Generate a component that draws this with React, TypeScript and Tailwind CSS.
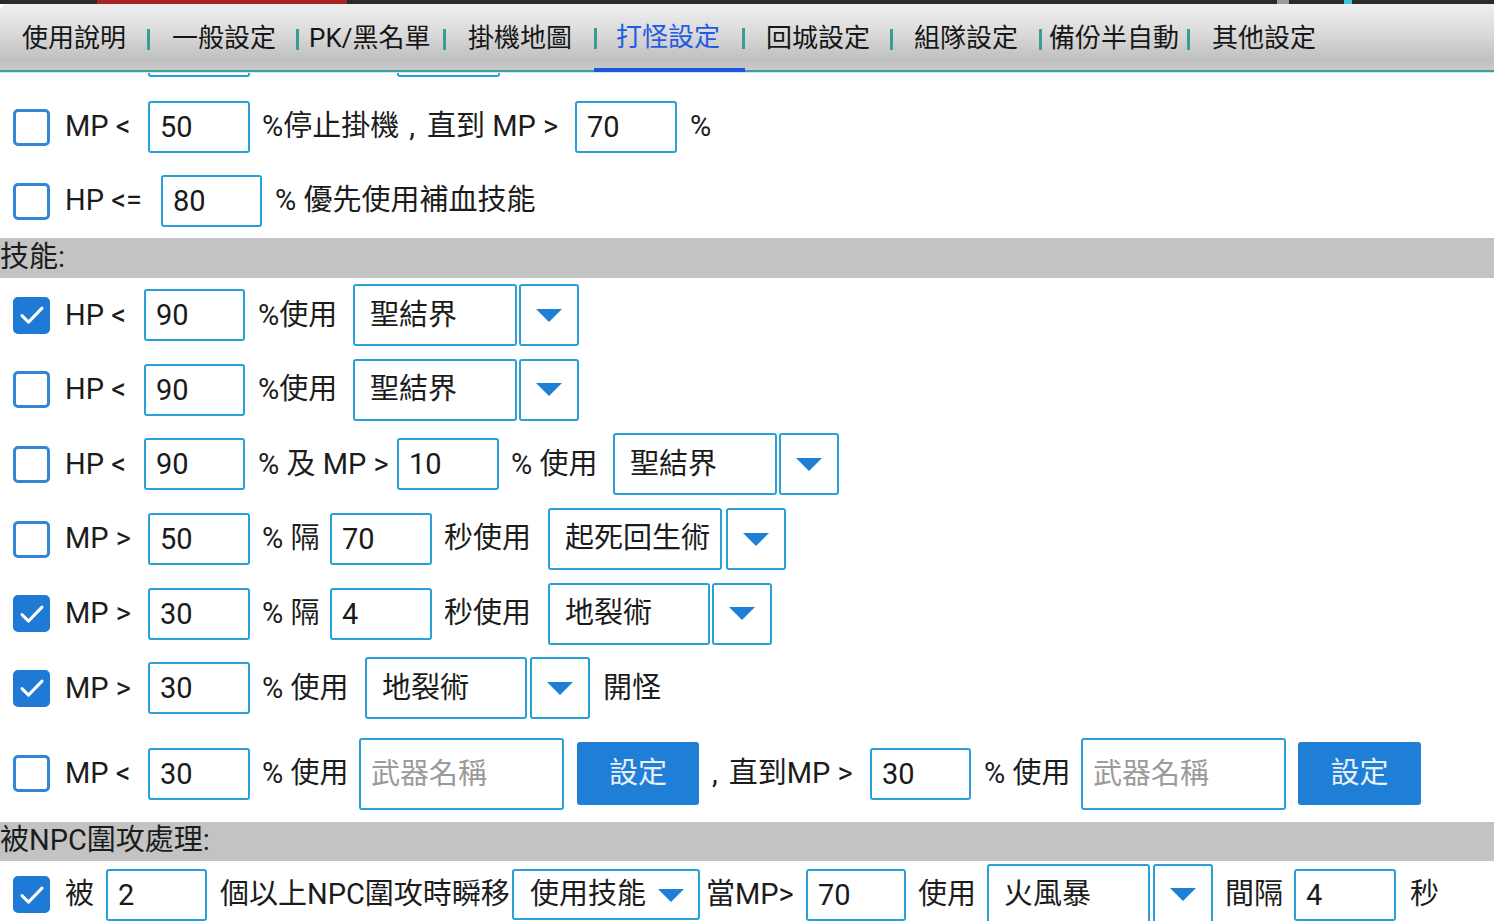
import React from "react";

const Check = ({ on = false }: { on?: boolean }) => (
  <div
    className={
      on
        ? "ml-[13px] w-[37px] h-[37px] shrink-0 rounded-[5px] border-[3px] border-[#1f7ad6] bg-[#1f7ad6] flex items-center justify-center"
        : "ml-[13px] w-[37px] h-[37px] shrink-0 rounded-[5px] border-[3px] border-[#3385d6] bg-white"
    }
  >
    {on && (
      <svg width="30" height="30" viewBox="0 0 24 24" fill="none">
        <path d="M4 12.5l5.2 5.2L20 6.5" stroke="#fff" strokeWidth="2.4" strokeLinecap="round" strokeLinejoin="round" />
      </svg>
    )}
  </div>
);

const Tri = () => (
  <svg width="26" height="13" viewBox="0 0 26 13">
    <polygon points="0,0 26,0 13,13" fill="#1f7fd6" />
  </svg>
);

const Sep = () => <div className="w-[3px] h-[21px] bg-[#3a9d93] shrink-0 mt-[2px]" />;

const inputCls =
  "h-[52px] shrink-0 border-2 border-[#2aa0d8] rounded-[3px] px-[10px] text-[29px] text-[#1a1a1a] bg-white outline-none";

export default function App() {
  return (
    <div className="w-[1494px] h-[921px] overflow-hidden bg-white font-['Roboto','Noto_Sans_CJK_TC',sans-serif] text-[29px] text-[#1c1c1c]">
      {/* top strip */}
      <div className="h-[4px] bg-[#2a2a2a] flex">
        <div className="ml-[97px] w-[250px] bg-[#a82323]" />
        <div className="ml-[930px] w-[12px] bg-[#9a9a9a]" />
        <div className="ml-[55px] w-[8px] bg-[#3cc6d8]" />
      </div>

      {/* tab bar */}
      <div className="h-[68px] rounded-tl-[8px] border-b-2 border-[#3f9e98] bg-[linear-gradient(to_bottom,#efefef_0%,#dadada_45%,#bfbfbf_85%,#cacaca_100%)] flex items-stretch text-[26px] text-[#161616]">
        <div className="flex items-center pt-[2px]">
          <span className="ml-[22px] w-[125px]">使用說明</span>
          <Sep />
          <span className="ml-[22px] w-[124px]">一般設定</span>
          <Sep />
          <span className="ml-[10px] w-[134px]">PK/黑名單</span>
          <Sep />
          <span className="ml-[22px] w-[126px]">掛機地圖</span>
        </div>
        <div className="w-[151px] flex items-center pt-[2px] border-b-[4px] border-[#1a55e3] -mb-[2px]">
          <Sep />
          <span className="ml-[19px] w-[126px] text-[#1f5be6]">打怪設定</span>
          <Sep />
        </div>
        <div className="flex items-center pt-[2px]">
          <span className="ml-[21px] w-[124px]">回城設定</span>
          <Sep />
          <span className="ml-[21px] w-[125px]">組隊設定</span>
          <Sep />
          <span className="ml-[7px] w-[138px]">備份半自動</span>
          <Sep />
          <span className="ml-[22px]">其他設定</span>
        </div>
      </div>
      <div className="h-[1px] bg-[#c4ecec]" />

      {/* peeking inputs from the row above */}
      <div className="h-[17px] flex items-start">
        <div className="ml-[148px] w-[102px] h-[4px] border-x-2 border-b-2 border-[#2aa0d8] rounded-b-[3px]" />
        <div className="ml-[147px] w-[103px] h-[4px] border-x-2 border-b-2 border-[#2aa0d8] rounded-b-[3px]" />
      </div>

      {/* row 1 */}
      <div className="h-[74px] flex items-center">
        <Check />
        <span className="ml-[15px] w-[83px] shrink-0">MP &lt;</span>
        <input readOnly value="50" className={inputCls + " w-[102px]"} />
        <span className="ml-[12px] w-[313px] shrink-0">
          %停止掛機<span className="ml-[10px] mr-[12px]">,</span>直到 MP &gt;
        </span>
        <input readOnly value="70" className={inputCls + " w-[102px]"} />
        <span className="ml-[13px]">%</span>
      </div>

      {/* row 2 */}
      <div className="h-[74px] flex items-center">
        <Check />
        <span className="ml-[15px] w-[96px] shrink-0">HP &lt;=</span>
        <input readOnly value="80" className={inputCls + " w-[101px]"} />
        <span className="ml-[13px]">% 優先使用補血技能</span>
      </div>

      <div className="h-[40px] bg-[#c3c3c3] flex items-center">技能:</div>

      {/* skill rows */}
      {[true, false].map((on, i) => (
        <div key={i} className="h-[74.6px] flex items-center">
          <Check on={on} />
          <span className="ml-[15px] w-[79px] shrink-0">HP &lt;</span>
          <input readOnly value="90" className={inputCls + " w-[101px] h-[51px]"} />
          <span className="ml-[13px] w-[95px] shrink-0">%使用</span>
          <SelectBox w="w-[164px]" text="聖結界" />
          <DropBtn ml="ml-[2px]" />
        </div>
      ))}

      <div className="h-[74.6px] flex items-center">
        <Check />
        <span className="ml-[15px] w-[79px] shrink-0">HP &lt;</span>
        <input readOnly value="90" className={inputCls + " w-[101px] h-[51px]"} />
        <span className="ml-[13px] w-[139px] shrink-0">% 及 MP &gt;</span>
        <input readOnly value="10" className={inputCls + " w-[102px] h-[51px]"} />
        <span className="ml-[12px] w-[102px] shrink-0">% 使用</span>
        <SelectBox w="w-[164px]" text="聖結界" />
        <DropBtn ml="ml-[2px]" />
      </div>

      <div className="h-[74.6px] flex items-center">
        <Check />
        <span className="ml-[15px] w-[83px] shrink-0">MP &gt;</span>
        <input readOnly value="50" className={inputCls + " w-[102px] h-[51px]"} />
        <span className="ml-[12px] w-[68px] shrink-0">% 隔</span>
        <input readOnly value="70" className={inputCls + " w-[102px] h-[51px]"} />
        <span className="ml-[12px] w-[104px] shrink-0">秒使用</span>
        <SelectBox w="w-[174px]" text="起死回生術" />
        <DropBtn ml="ml-[4px]" />
      </div>

      <div className="h-[74.6px] flex items-center">
        <Check on />
        <span className="ml-[15px] w-[83px] shrink-0">MP &gt;</span>
        <input readOnly value="30" className={inputCls + " w-[102px] h-[51px]"} />
        <span className="ml-[12px] w-[68px] shrink-0">% 隔</span>
        <input readOnly value="4" className={inputCls + " w-[102px] h-[51px]"} />
        <span className="ml-[12px] w-[104px] shrink-0">秒使用</span>
        <SelectBox w="w-[162px]" text="地裂術" />
        <DropBtn ml="ml-[2px]" />
      </div>

      <div className="h-[74.6px] flex items-center">
        <Check on />
        <span className="ml-[15px] w-[83px] shrink-0">MP &gt;</span>
        <input readOnly value="30" className={inputCls + " w-[102px] h-[51px]"} />
        <span className="ml-[12px] w-[103px] shrink-0">% 使用</span>
        <SelectBox w="w-[162px]" text="地裂術" />
        <DropBtn ml="ml-[3px]" />
        <span className="ml-[13px]">開怪</span>
      </div>

      {/* weapon row */}
      <div className="h-[96px] flex items-center">
        <Check />
        <span className="ml-[15px] w-[83px] shrink-0">MP &lt;</span>
        <input readOnly value="30" className={inputCls + " w-[102px] h-[51px]"} />
        <span className="ml-[12px] w-[97px] shrink-0">% 使用</span>
        <input readOnly placeholder="武器名稱" className={inputCls + " w-[205px] h-[72px] placeholder:text-[#9b9b9b]"} />
        <button className="ml-[13px] w-[122px] h-[63px] shrink-0 rounded-[3px] bg-[#1f7fd6] text-[#e8f1fb] text-[29px]">設定</button>
        <span className="ml-[11px] w-[160px] shrink-0">
          <span className="ml-[2px] mr-[11px]">,</span>直到MP &gt;
        </span>
        <input readOnly value="30" className={inputCls + " w-[101px] h-[51px]"} />
        <span className="ml-[13px] w-[97px] shrink-0">% 使用</span>
        <input readOnly placeholder="武器名稱" className={inputCls + " w-[205px] h-[72px] placeholder:text-[#9b9b9b]"} />
        <button className="ml-[12px] w-[123px] h-[63px] shrink-0 rounded-[3px] bg-[#1f7fd6] text-[#e8f1fb] text-[29px]">設定</button>
      </div>

      <div className="h-[39px] bg-[#c3c3c3] flex items-center">被NPC圍攻處理:</div>

      <div className="h-[68px] flex items-center">
        <Check on />
        <span className="ml-[15px] w-[41px] shrink-0">被</span>
        <input readOnly value="2" className={inputCls + " w-[101px] h-[51px]"} />
        <span className="ml-[13px] w-[292px] shrink-0">個以上NPC圍攻時瞬移</span>
        <div className="w-[188px] h-[51px] shrink-0 border-2 border-[#2aa0d8] rounded-[3px] flex items-center pl-[16px]">
          <span>使用技能</span>
          <span className="ml-[12px] mt-[2px]">
            <Tri />
          </span>
        </div>
        <span className="ml-[6px] w-[100px] shrink-0">當MP&gt;</span>
        <input readOnly value="70" className={inputCls + " w-[100px] h-[51px]"} />
        <span className="ml-[12px] w-[69px] shrink-0">使用</span>
        <SelectBox w="w-[163px]" text="火風暴" />
        <DropBtn ml="ml-[3px]" />
        <span className="ml-[12px] w-[69px] shrink-0">間隔</span>
        <input readOnly value="4" className={inputCls + " w-[102px] h-[51px]"} />
        <span className="ml-[14px]">秒</span>
      </div>
    </div>
  );
}

function SelectBox({ w, text }: { w: string; text: string }) {
  return (
    <div className={w + " h-[62px] shrink-0 border-2 border-[#2aa0d8] rounded-[3px] flex items-center pl-[15px]"}>
      {text}
    </div>
  );
}

function DropBtn({ ml }: { ml: string }) {
  return (
    <div className={ml + " w-[60px] h-[62px] shrink-0 border-2 border-[#2aa0d8] rounded-[3px] flex items-center justify-center"}>
      <Tri />
    </div>
  );
}
